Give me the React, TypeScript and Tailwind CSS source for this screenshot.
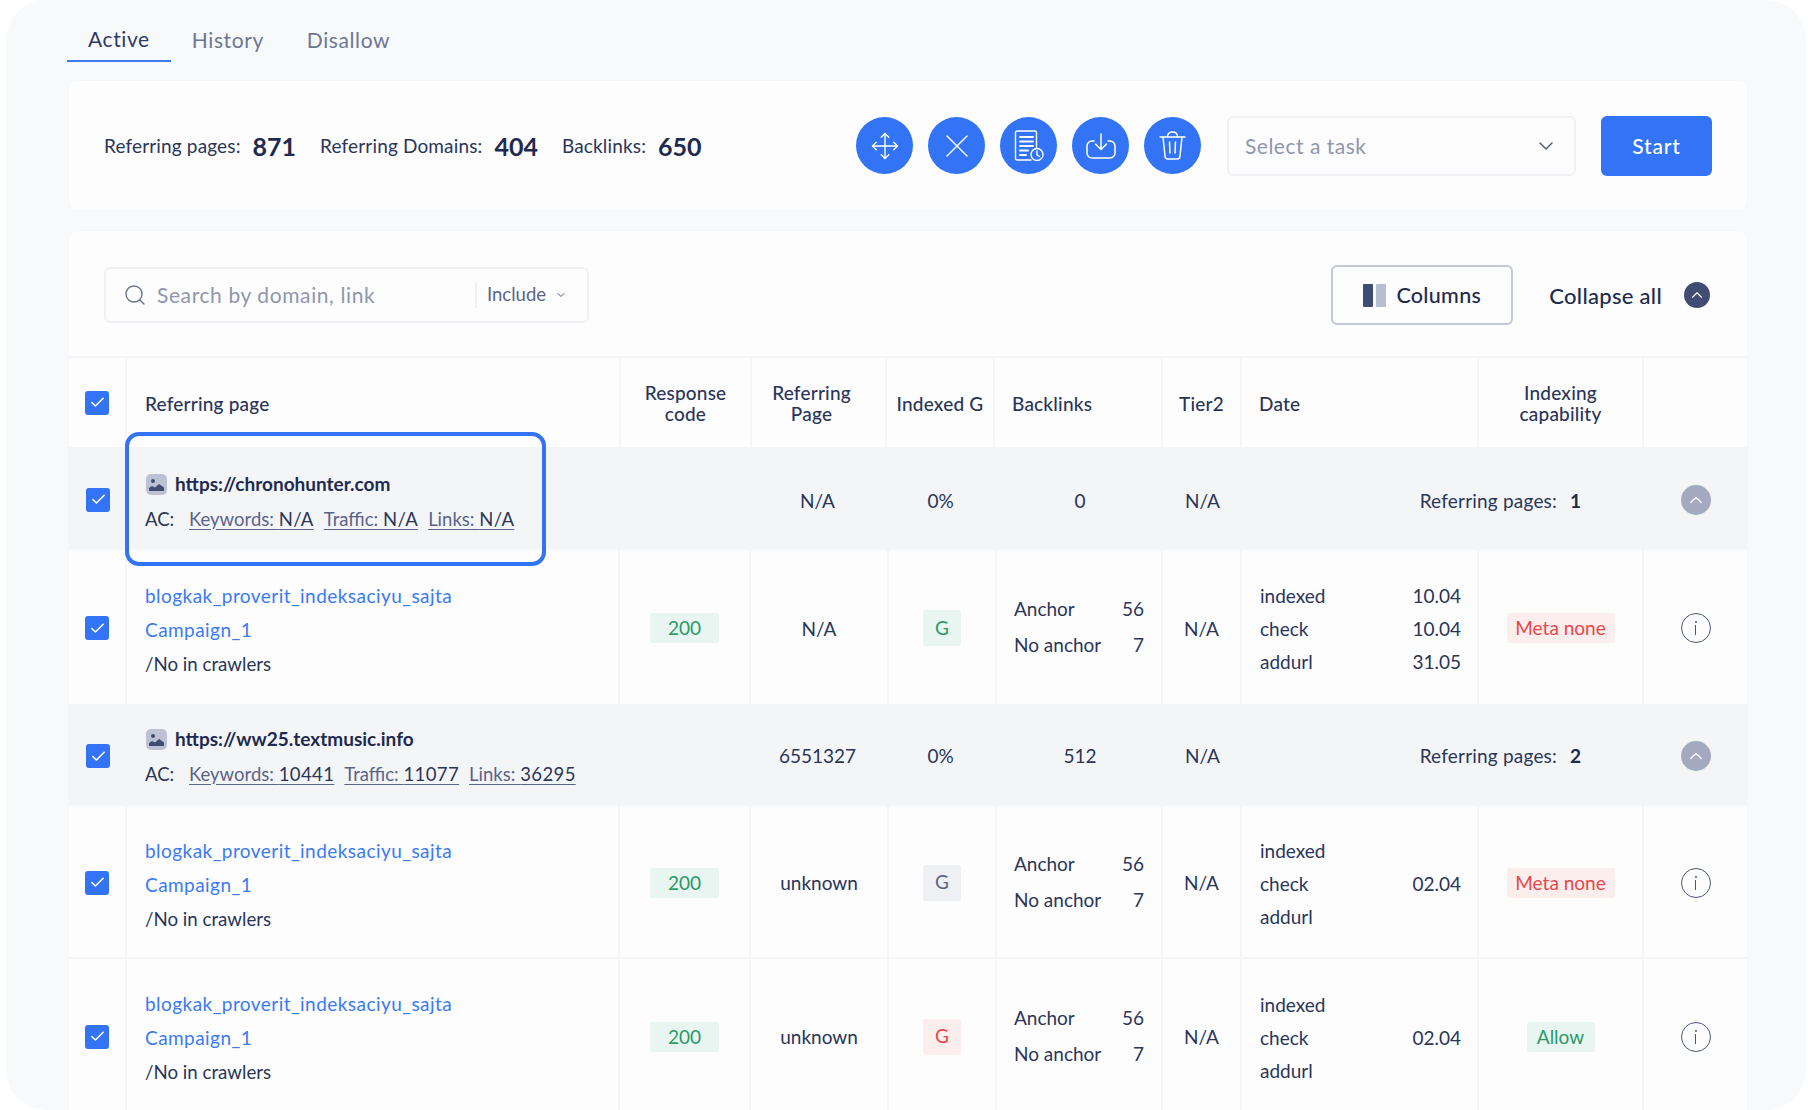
import React from "react";
import { ChevronDown, ChevronUp, Search, Move, X, Check } from "lucide-react";

const HEAD = "grid grid-cols-[58px_494px_131px_135px_108px_168px_79px_237px_165px_103px]";
const BODY = "grid grid-cols-[58px_493px_131px_138px_108px_166px_79px_237px_165px_103px]";
const cell = "flex items-center border-r-2 border-[#f4f5f7]";
const center = "flex items-center justify-center border-r-2 border-[#f4f5f7]";

function Box() {
  return (
    <span className="flex h-[24px] w-[24px] items-center justify-center rounded-[3px] bg-[#3374f6]">
      <Check size={17} strokeWidth={2.2} className="text-white" />
    </span>
  );
}

function DocIcon() {
  return (
    <svg width="30" height="32" viewBox="0 0 30 32" fill="none" stroke="white" strokeWidth="1.4" strokeLinecap="round" strokeLinejoin="round">
      <path d="M17 30H3a1.5 1.5 0 0 1-1.5-1.500V2.500A1.500 1.500 0 0 1 3 1h18a1.500 1.500 0 0 1 1.500 1.500V18" />
      <path d="M6 7h13M6 11.500h13M6 16h13M6 20.500h8M6 25h6" strokeWidth="1.800" />
      <circle cx="23" cy="24.500" r="6" />
      <path d="M23 21v4l2.500 1.500" />
    </svg>
  );
}

function TrayIcon() {
  return (
    <svg width="30" height="26" viewBox="0 0 30 26" fill="none" stroke="white" strokeWidth="1.500" strokeLinecap="round" strokeLinejoin="round">
      <path d="M8 8H6a5 5 0 0 0-5 5v7a5 5 0 0 0 5 5h18a5 5 0 0 0 5-5v-7a5 5 0 0 0-5-5h-2" />
      <path d="M15 1v15M9.500 11l5.500 5.500 5.500-5.500" />
    </svg>
  );
}

function TrashIcon() {
  return (
    <svg width="27" height="29" viewBox="0 0 27 29" fill="none" stroke="white" strokeWidth="1.500" strokeLinecap="round" strokeLinejoin="round">
      <path d="M1 6h25" />
      <path d="M8.500 6c0-3 1.500-5 5-5s5 2 5 5" />
      <path d="M4 6l2 19a3 3 0 0 0 3 3h9a3 3 0 0 0 3-3l2-19" />
      <path d="M10.500 11l.5 11M16.500 11l-.5 11" />
    </svg>
  );
}

function Fav() {
  return (
    <span className="flex h-[21px] w-[21px] items-center justify-center rounded-[5px] bg-[#bcc1d3]">
      <svg width="17" height="17" viewBox="0 0 17 17">
        <circle cx="5" cy="5" r="2" fill="#414c73" />
        <path d="M1 15v-3l3-2 3 1.500 4-3.500 5 3.500V15z" fill="#414c73" />
      </svg>
    </span>
  );
}

function Circle({ children }: { children: React.ReactNode }) {
  return <span className="flex h-[57px] w-[57px] items-center justify-center rounded-full bg-[#3374f6]">{children}</span>;
}

function Stat({ label, value }: { label: string; value: string }) {
  return (
    <span className="flex items-center gap-[12px] pt-[2px]">
      <span className="text-[19px] tracking-[0.15px] text-[#2a3558]">{label}</span>
      <span className="text-[25px] font-bold text-[#1e2a4f]">{value}</span>
    </span>
  );
}

function Tag({ tone, children, w }: { tone: "green" | "red"; children: React.ReactNode; w: string }) {
  const c = tone === "green" ? "bg-[#e9f5f0] text-[#2b9a68]" : "bg-[#fdeeee] text-[#e8474c]";
  return <span className={`flex h-[30px] items-center justify-center rounded-[3px] pt-[1px] text-[19px] ${c} ${w}`}>{children}</span>;
}

function Group({ url, ref1, kw, tr, li, count, pr, h, nudge, textPad }: { url: string; ref1: string; kw: string; tr: string; li: string; count: string; pr: string; h: string; nudge: string; textPad: string }) {
  const linkCls = "underline decoration-[#5a6488] underline-offset-[3px]";
  return (
    <div className={`${BODY} ${h} bg-[#f4f5f7] pt-[2px] text-[19px] text-[#2a3558]`}>
      <div className="flex items-center justify-center"><Box /></div>
      <div className={`flex flex-col justify-center pl-[18px] text-[18.5px] ${textPad}`}>
        <div className="flex h-[35px] items-center gap-[8px] pl-[1px]">
          <Fav />
          <span className="text-[19px] font-bold text-[#1e2a4f]">{url}</span>
        </div>
        <div className="flex h-[35px] items-center">
          <span className="w-[44px]">AC:</span>
          <span className={`${linkCls} text-[#5a6488]`}>Keywords: <span className="tracking-[0.4px] text-[#2a3558]">{kw}</span></span>
          <span className={`${linkCls} ml-[10px] text-[#5a6488]`}>Traffic: <span className="tracking-[0.4px] text-[#2a3558]">{tr}</span></span>
          <span className={`${linkCls} ml-[10px] text-[#5a6488]`}>Links: <span className="tracking-[0.4px] text-[#2a3558]">{li}</span></span>
        </div>
      </div>
      <div />
      <div className={`flex items-center justify-center pr-[5px] ${nudge}`}>{ref1}</div>
      <div className={`flex items-center justify-center pr-[5px] ${nudge}`}>0%</div>
      <div className={`flex items-center justify-center ${nudge}`}>{count}</div>
      <div className={`flex items-center justify-center ${nudge}`}>N/A</div>
      <div className={`col-span-2 flex items-center justify-end pr-[65px] ${nudge}`}>
        <span className="tracking-[0.2px]">Referring pages:</span>
        <span className="ml-[13px] w-[9px] font-bold text-[#1e2a4f]">{pr}</span>
      </div>
      <div className="flex items-center justify-center">
        <span className="flex h-[30px] w-[30px] items-center justify-center rounded-full bg-[#a3a9bf]">
          <ChevronUp size={22} strokeWidth={1.2} className="text-white" />
        </span>
      </div>
    </div>
  );
}

function Row({ ref1, g, dates, tag, bordered, h, textPad }: { ref1: string; g: "green" | "gray" | "red"; dates: string[]; tag: "meta" | "allow"; bordered?: boolean; h: string; textPad: string }) {
  const gc = g === "green" ? "bg-[#e9f5f0] text-[#2b9a68]" : g === "gray" ? "bg-[#eff0f4] text-[#5a6488]" : "bg-[#fdeeee] text-[#e8474c]";
  const labels = ["indexed", "check", "addurl"];
  return (
    <div className={`${BODY} ${h} text-[19px] text-[#2a3558] ${bordered ? "border-b-2 border-[#f4f5f7]" : ""}`}>
      <div className={`${center} pt-[2px]`}><Box /></div>
      <div className={`${cell} pl-[18px]`}>
        <div className={`flex flex-col leading-[34px] ${textPad}`}>
          <span className="tracking-[0.45px] text-[#3b7af5]">blogkak_proverit_indeksaciyu_sajta</span>
          <span className="tracking-[0.45px] text-[#3b7af5]">Campaign_1</span>
          <span className="text-[18.7px]">/No in crawlers</span>
        </div>
      </div>
      <div className={`${center} pt-[2px]`}><Tag tone="green" w="w-[69px]">200</Tag></div>
      <div className={`${center} pt-[4px]`}>{ref1}</div>
      <div className={`${center} pt-[2px]`}><span className={`flex h-[36px] w-[38px] items-center justify-center rounded-[3px] ${gc}`}>G</span></div>
      <div className={`${cell} pl-[17px] pr-[17px]`}>
        <div className="flex w-full flex-col leading-[36px]">
          <div className="flex justify-between"><span>Anchor</span><span>56</span></div>
          <div className="flex justify-between"><span>No anchor</span><span>7</span></div>
        </div>
      </div>
      <div className={`${center} pt-[4px]`}>N/A</div>
      <div className={`${cell} pl-[18px] pr-[16px]`}>
        <div className="flex w-full flex-col pt-[3px] leading-[33px]">
          {labels.map((l, i) => (
            <div key={l} className="flex justify-between"><span>{l}</span><span>{dates[i]}</span></div>
          ))}
        </div>
      </div>
      <div className={`${center} pt-[2px]`}>
        {tag === "meta" ? <Tag tone="red" w="w-[108px]">Meta none</Tag> : <Tag tone="green" w="w-[68px]">Allow</Tag>}
      </div>
      <div className="flex items-center justify-center pt-[2px]">
        <span className="flex h-[30px] w-[30px] flex-col items-center justify-center gap-[2px] rounded-full border-[1.75px] border-[#4a5578]">
          <span className="h-[2px] w-[2px] rounded-full bg-[#4a5578]" />
          <span className="h-[10px] w-[1.5px] bg-[#4a5578]" />
        </span>
      </div>
    </div>
  );
}

export default function App() {
  return (
    <div className="h-[1110px] w-[1808px] overflow-hidden bg-white font-['Lato',sans-serif]">
      <div className="ml-[6px] mr-[2px] h-full overflow-hidden rounded-[40px] bg-[#f8f9fb] pl-[63px] pr-[59px]">
        <div className="-ml-[2px] flex h-[62px] items-end text-[21px] tracking-[0.6px] text-[#6c7693]">
          <div className="flex h-[62px] items-center border-b-2 border-[#3b7af5] px-[21px] pt-[18px] text-[#2f3b63]">Active</div>
          <div className="flex h-[62px] items-center px-[21px] pt-[18px]">History</div>
          <div className="flex h-[62px] items-center px-[22px] pt-[18px]">Disallow</div>
        </div>

        <div className="mt-[19px] flex h-[129px] items-center rounded-[8px] bg-[#fdfdfe] pl-[35px] pr-[35px] shadow-[0_0_2px_#eef0f4]">
          <div className="flex items-center gap-[24px]">
            <Stat label="Referring pages:" value="871" />
            <Stat label="Referring Domains:" value="404" />
            <Stat label="Backlinks:" value="650" />
          </div>
          <div className="ml-auto flex items-center gap-[15px]">
            <Circle><Move size={30} strokeWidth={1.1} className="text-white" /></Circle>
            <Circle><X size={40} strokeWidth={0.85} className="text-white" /></Circle>
            <Circle><DocIcon /></Circle>
            <Circle><TrayIcon /></Circle>
            <Circle><TrashIcon /></Circle>
          </div>
          <div className="ml-[26px] flex h-[60px] w-[349px] items-center justify-between rounded-[6px] border-2 border-[#f0f1f5] pl-[16px] pr-[16px] text-[21px] tracking-[0.5px] text-[#8f96ad]">
            <span>Select a task</span>
            <ChevronDown size={24} strokeWidth={1.4} className="text-[#4a5578]" />
          </div>
          <button className="ml-[25px] flex h-[60px] w-[111px] items-center justify-center rounded-[6px] bg-[#3374f6] text-[21px] font-medium tracking-[0.8px] text-white">Start</button>
        </div>

        <div className="relative mt-[21px] rounded-t-[8px] bg-[#fdfdfe] shadow-[0_0_2px_#eef0f4]">
          <div className="flex h-[125px] items-center pl-[35px] pr-[37px] pt-[3px]">
            <div className="flex h-[56px] w-[485px] items-center rounded-[6px] border-2 border-[#f0f1f5] pl-[17px] text-[#8f96ad]">
              <Search size={24} strokeWidth={1.4} className="text-[#6c7693]" />
              <span className="ml-[10px] w-[318px] text-[21px] tracking-[0.6px]">Search by domain, link</span>
              <span className="flex h-[26px] items-center border-l-2 border-[#f0f1f5] pl-[10px] text-[18.5px] text-[#5a6488]">Include</span>
              <ChevronDown size={12} strokeWidth={2} className="ml-[9px] text-[#4a5578]" />
            </div>
            <div className="ml-auto flex h-[60px] w-[182px] items-center justify-center gap-[10px] rounded-[6px] border-2 border-[#c3c8d8]">
              <span className="flex gap-[3px]">
                <span className="h-[23px] w-[10px] rounded-[1px] bg-[#414c73]" />
                <span className="h-[23px] w-[10px] rounded-[1px] bg-[#b8bdd0]" />
              </span>
              <span className="text-[21.5px] font-medium tracking-[0.3px] text-[#1e2a4f]">Columns</span>
            </div>
            <span className="ml-[36px] text-[22px] font-medium tracking-[0.3px] text-[#1e2a4f]">Collapse all</span>
            <span className="ml-[22px] flex h-[26px] w-[26px] items-center justify-center rounded-full bg-[#414c73]">
              <ChevronUp size={18} strokeWidth={1.5} className="text-white" />
            </span>
          </div>

          <div className={`${HEAD} h-[91px] border-t-2 border-[#f4f5f7] text-center text-[19px] font-medium leading-[21px] tracking-[0.2px] text-[#2a3558]`}>
            <div className={center}><Box /></div>
            <div className={`${cell} pl-[18px] pt-[2px]`}>Referring page</div>
            <div className={`${center} pt-[1px]`}>Response<br />code</div>
            <div className={`${center} pr-[14px] pt-[1px]`}>Referring<br />Page</div>
            <div className={`${center} pt-[2px]`}>Indexed G</div>
            <div className={`${cell} pl-[17px] pt-[2px]`}>Backlinks</div>
            <div className={`${center} pt-[2px]`}>Tier2</div>
            <div className={`${cell} pl-[17px] pt-[2px]`}>Date</div>
            <div className={`${center} pt-[1px]`}>Indexing<br />capability</div>
            <div />
          </div>

          <Group h="h-[103px]" nudge="pt-[3px]" textPad="pt-[5px]" url="https://chronohunter.com" ref1="N/A" kw="N/A" tr="N/A" li="N/A" count="0" pr="1" />
          <Row h="h-[154px]" textPad="pt-[5px]" ref1="N/A" g="green" dates={["10.04", "10.04", "31.05"]} tag="meta" />
          <Group h="h-[102px]" nudge="" textPad="pt-[2px]" url="https://ww25.textmusic.info" ref1="6551327" kw="10441" tr="11077" li="36295" count="512" pr="2" />
          <Row h="h-[153px]" textPad="pt-[7px]" ref1="unknown" g="gray" dates={["", "02.04", ""]} tag="meta" bordered />
          <Row h="h-[153px]" textPad="pt-[5px]" ref1="unknown" g="red" dates={["", "02.04", ""]} tag="allow" />

          <div className="absolute left-[56px] top-[201px] h-[134px] w-[421px] rounded-[14px] border-[4px] border-[#3374f6]" />
        </div>
      </div>
    </div>
  );
}
